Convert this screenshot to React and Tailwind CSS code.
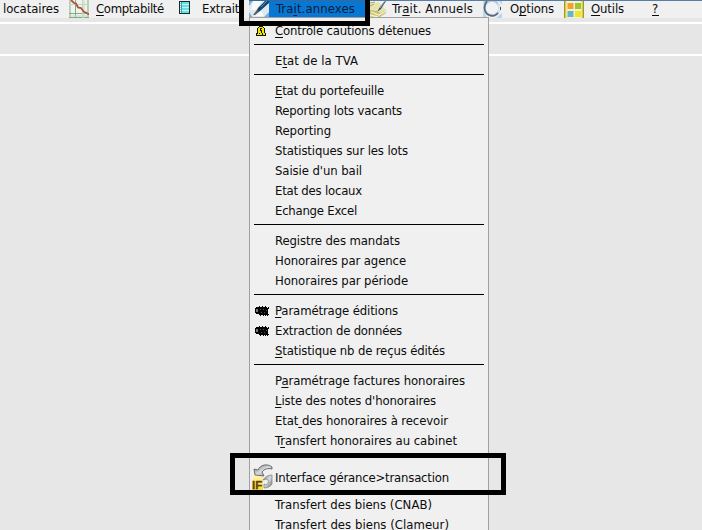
import { useLayoutEffect, useRef } from "react";

// Text run tightened or stretched to a fixed advance; the mnemonic letter is given by index.
function Label({ text, mnemonic = -1, width, className = "" }) {
  const ref = useRef(null);
  useLayoutEffect(() => {
    const el = ref.current;
    el.style.letterSpacing = "0px";
    const natural = el.getBoundingClientRect().width;
    el.style.letterSpacing = `${(width - natural) / text.length}px`;
  }, [text, width]);
  return (
    <span ref={ref} className={`inline-block whitespace-pre ${className}`}>
      {mnemonic < 0 ? (
        text
      ) : (
        <>
          {text.slice(0, mnemonic)}
          <span className="underline decoration-1 underline-offset-[1.5px] [text-decoration-skip-ink:none]">{text[mnemonic]}</span>
          {text.slice(mnemonic + 1)}
        </>
      )}
    </span>
  );
}

function ChartIcon() {
  return (
    <svg width="20" height="18" viewBox="0 0 20 18" className="block">
      <rect width="20" height="18" fill="#eef4ec" />
      <path d="M1 0v18M6.5 0v18M19 0v18M0 13.5h20M0 17.5h20" stroke="#83a985" strokeWidth="1" />
      <path d="M13.5 0v18M0 4.5h20M15 0v18M0 16h20" stroke="#c2d8c2" strokeWidth="1" />
      <path d="M2 0l3 3 2 .5 2 4 3 .5 3 4 2 .5 3 2" fill="none" stroke="#b0503c" strokeWidth="1.8" />
    </svg>
  );
}

function SheetIcon() {
  return (
    <svg width="11" height="13" viewBox="0 0 11 13" className="block">
      <rect width="11" height="13" fill="#162a35" />
      <rect x="1" y="1" width="9" height="11" fill="#65e2e4" />
      <path d="M1.5 1v11" stroke="#fff" strokeDasharray="1 1" />
      <path d="M3 3.5h7M3 6.5h7M3 9.5h7" stroke="#c5f8f5" />
      <path d="M2.5 1v11" stroke="#4f9daa" />
    </svg>
  );
}

function PenIcon() {
  return (
    <svg width="20" height="17" viewBox="0 0 20 17" className="block">
      <rect width="20" height="17" fill="#dde9f1" />
      <path d="M0 0h4L0 5zM0 11l4 6H0zM14 17l6-6v6z" fill="#7eacd1" />
      <path d="M4 0h9L7 9H2zM6 15l6-5 3 5z" fill="#f8fafb" />
      <path d="M20 0h-4L9 7l-2 4 4-1L20 2z" fill="#17456d" />
      <path d="M4 14l4-5 3 1-5 4z" fill="#575b5e" />
      <path d="M12 6l6-6" stroke="#4f8cbe" strokeWidth="1" />
    </svg>
  );
}

function NotesIcon() {
  return (
    <svg width="19" height="17" viewBox="0 0 19 17" className="block">
      <path d="M0 3l9-2 7 8-6 7H0z" fill="#e8e3ac" />
      <path d="M0 9l7 1 3 2 6-3v3l-6 4H1l-1-2z" fill="#c8bf75" />
      <path d="M1 11l8 3 7-4M0 14l8 2" fill="none" stroke="#f8f4ca" strokeWidth="1.3" />
      <path d="M0 2l5-1M0 5l4-2" stroke="#a9a760" />
      <path d="M15 0l-5 6-3 5 4-3 5-8z" fill="#334f67" />
      <path d="M14 1l-4 6" stroke="#88a8c0" />
    </svg>
  );
}

function RingIcon() {
  return (
    <svg width="20" height="17" viewBox="0 0 20 17" className="block">
      <path d="M0 0h5L1 6zM0 9l4 8H0zM13 17l6-5v5zM14 0h5v3z" fill="#b9d5e9" />
      <circle cx="9" cy="7" r="7.5" fill="#f0f2f5" stroke="#b8c6d3" strokeWidth="2.6" />
      <path d="M4 0C0 5 1 12 6 14s7 0 9-2" fill="none" stroke="#59697b" strokeWidth="1.7" />
      <path d="M15 0c2 3 2 8 0 11" fill="none" stroke="#e2ebf1" strokeWidth="2" />
      <path d="M17.5 6v3" stroke="#3b4856" />
    </svg>
  );
}

function TilesIcon() {
  return (
    <svg width="20" height="17" viewBox="0 0 20 17" className="block">
      <rect width="20" height="17" fill="#f4f0d2" />
      <path d="M.8 0v17M19.2 0v17" stroke="#a79b16" strokeWidth="1.6" />
      <path d="M2 0v17M18 0v17" stroke="#e5d94f" />
      <rect x="3.5" y="2" width="6" height="6" fill="#f6a029" />
      <rect x="11" y="2" width="6" height="6" fill="#9ac92f" />
      <rect x="3.5" y="10" width="6" height="6" fill="#67b6c7" />
      <rect x="11" y="10" width="6" height="6" fill="#efe52b" />
    </svg>
  );
}

function BellIcon() {
  return (
    <svg width="10" height="10" viewBox="0 0 10 10" className="-ml-[3px] block" shapeRendering="crispEdges">
      <path d="M3 0h4v1h1v1h1v5h1v3H0V7h1V2h1V1h1z" fill="#161600" />
      <path d="M3 1h4v1h1v5h1v2H7V8H6v1H1V8h1V2h1z" fill="#f1e600" />
      <path d="M4 2h2v1H5v1h1v3H5V5H4zM3 7h1v1H3zM6 7h1v1H6z" fill="#171700" />
    </svg>
  );
}

function FilmIcon() {
  return (
    <svg width="15" height="11" viewBox="0 0 15 11" className="block" shapeRendering="crispEdges">
      <path d="M1 1h3V0h1v1h2V0h1v1h2V0h1v1h1v1h1V1h1v2h-1v5h1v1h-1v1h-1v-1h-1v1h-1v-1H9v1H8V9H6v1H5V9H4V8H1V7H0V2h1z" fill="#050505" />
      <path d="M1 3h2v3H1z" fill="#777" />
      <path d="M5 3h1v1H5zM8 3h1v1H8zM11 4h1v1h-1zM6 6h1v1H6zM9 6h1v1H9z" fill="#505050" />
    </svg>
  );
}

function InterfaceIcon() {
  return (
    <svg width="21" height="28" viewBox="0 0 21 28" className="block">
      <defs>
        <linearGradient id="metal" x1="0" y1="0" x2="1" y2="1">
          <stop offset="0" stopColor="#777b7e" />
          <stop offset=".5" stopColor="#dadddf" />
          <stop offset="1" stopColor="#696c6f" />
        </linearGradient>
        <linearGradient id="gold" x1="0" y1="0" x2="0" y2="1">
          <stop offset="0" stopColor="#fff6ba" />
          <stop offset=".55" stopColor="#ffe36a" />
          <stop offset="1" stopColor="#f7d530" />
        </linearGradient>
      </defs>
      <path d="M2 11h9v16H0V17z" fill="url(#gold)" />
      <path d="M20 3C15-1 8 1 6 6L2 5l1 6 9 1-2-4c2-3 6-4 10-3z" fill="url(#metal)" stroke="#515558" strokeWidth=".8" />
      <path d="M20 11v9c-1 2-4 4-8 4v-4l2 1c3-2 3-4 1-6l-4 1c2-3 5-5 9-5z" fill="url(#metal)" stroke="#7a7c7d" strokeWidth=".7" />
      <text x="0" y="24.5" fontFamily="Liberation Sans, sans-serif" fontSize="11.5" fontWeight="bold" fill="#5c4600" stroke="#5c4600" strokeWidth=".3">IF</text>
    </svg>
  );
}

const sections = [
  [{ text: "Contrôle cautions détenues", m: 0, w: 156, icon: <BellIcon /> }],
  [{ text: "Etat de la TVA", m: 1, w: 83 }],
  [
    { text: "Etat du portefeuille", m: 0, w: 109 },
    { text: "Reporting lots vacants", w: 127 },
    { text: "Reporting", w: 56 },
    { text: "Statistiques sur les lots", w: 133 },
    { text: "Saisie d'un bail", w: 87 },
    { text: "Etat des locaux", w: 87 },
    { text: "Echange Excel", w: 82 },
  ],
  [
    { text: "Registre des mandats", w: 125 },
    { text: "Honoraires par agence", w: 131 },
    { text: "Honoraires par période", w: 133 },
  ],
  [
    { text: "Paramétrage éditions", m: 0, w: 123, icon: <FilmIcon /> },
    { text: "Extraction de données", w: 127, icon: <FilmIcon /> },
    { text: "Statistique nb de reçus édités", m: 0, w: 170 },
  ],
  [
    { text: "Paramétrage factures honoraires", m: 1, w: 190 },
    { text: "Liste des notes d'honoraires", m: 0, w: 161 },
    { text: "Etat des honoraires à recevoir", m: 4, w: 173 },
    { text: "Transfert honoraires au cabinet", m: 1, w: 182 },
  ],
  [
    { text: "Interface gérance>transaction", w: 174, icon: <InterfaceIcon />, tall: true },
    { text: "Transfert des biens (CNAB)", w: 157 },
    { text: "Transfert des biens (Clameur)", w: 174 },
  ],
];

function MenuRow({ item }) {
  return (
    <div className={`flex shrink-0 items-center ${item.tall ? "h-[34px]" : "h-5"}`}>
      <div className={`flex w-[25px] shrink-0 ${item.tall ? "pl-[2px]" : "justify-center"}`}>{item.icon}</div>
      <Label text={item.text} mnemonic={item.m} width={item.w} />
    </div>
  );
}

function DropDown() {
  return (
    <div className="absolute top-[17px] left-[249px] flex h-[520px] w-[240px] flex-col border border-[#a0a0a0] bg-[#f0f0f0] pt-[3px]">
      {sections.map((rows, i) => (
        <div key={i} className="flex shrink-0 flex-col">
          {i > 0 && (
            <div className="h-2.5 pt-[3px] pr-1 pl-1">
              <div className="h-px bg-black" />
            </div>
          )}
          {rows.map((item) => (
            <MenuRow key={item.text} item={item} />
          ))}
        </div>
      ))}
    </div>
  );
}

export default function App() {
  return (
    <div className="relative h-[530px] w-[702px] overflow-hidden bg-[#e7e7e7] font-['DejaVu_Sans_Condensed','DejaVu_Sans',sans-serif] text-[13px] leading-[18px] text-[#0c0c0c] [font-stretch:condensed]">
      <div className="flex h-[18px] items-start bg-[#f0f0f0]">
        <div className="w-[69px] shrink-0 pl-[3px]"><Label text="locataires" width={56} /></div>
        <div className="w-[27px] shrink-0"><ChartIcon /></div>
        <div className="w-[83px] shrink-0"><Label text="Comptabilté" mnemonic={0} width={68} /></div>
        <div className="w-[23px] shrink-0 pt-px"><SheetIcon /></div>
        <div className="w-[47px] shrink-0"><Label text="Extrait" width={37} /></div>
        <div className="flex h-[17px] w-[116px] shrink-0 border-t border-[#356b9c] bg-[#0877d3] text-[#061d38]">
          <div className="w-[27px] shrink-0"><PenIcon /></div>
          <Label text="Trait.annexes" mnemonic={3} width={79} className="-mt-px" />
        </div>
        <div className="flex h-[18px] flex-1 border-t border-[#567fa6] pl-[5px]">
          <div className="w-[22px] shrink-0"><NotesIcon /></div>
          <div className="-mt-px w-[91px] shrink-0"><Label text="Trait. Annuels" mnemonic={2} width={81} /></div>
          <div className="w-[27px] shrink-0"><RingIcon /></div>
          <div className="-mt-px w-[54px] shrink-0"><Label text="Options" mnemonic={1} width={44} /></div>
          <div className="w-[27px] shrink-0"><TilesIcon /></div>
          <div className="-mt-px w-[61px] shrink-0"><Label text="Outils" mnemonic={0} width={33} /></div>
          <div className="-mt-px"><Label text="?" mnemonic={0} width={7} /></div>
        </div>
      </div>
      <div className="h-1 bg-[#e6e6e6]" />
      <div className="h-0.5 bg-white" />
      <div className="h-[30px] bg-[#e6e6e6]" />
      <div className="h-0.5 bg-white" />

      <DropDown />
      <div className="absolute -top-[5px] left-[239px] h-[31px] w-[131px] border-[5px] border-black" />
      <div className="absolute top-[453px] left-[230px] h-[42px] w-[276px] border-[5px] border-black" />
    </div>
  );
}
